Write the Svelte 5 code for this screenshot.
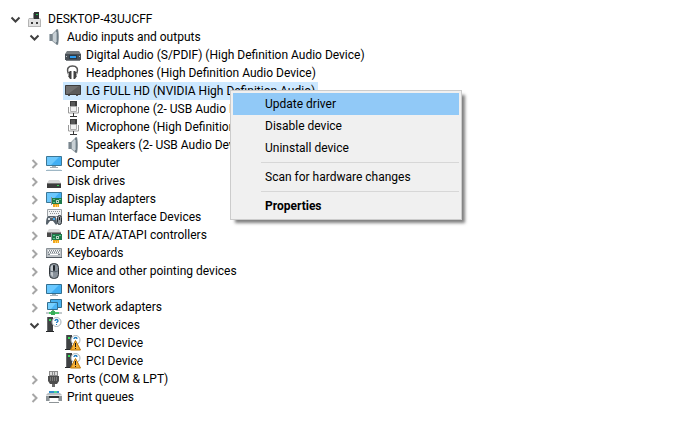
<script>
	let nodes = $state([
		{
			name: 'DESKTOP-43UJCFF',
			icon: 'host',
			open: true,
			children: [
				{
					name: 'Audio inputs and outputs',
					icon: 'speaker',
					open: true,
					children: [
						{ name: 'Digital Audio (S/PDIF) (High Definition Audio Device)', icon: 'spdif' },
						{ name: 'Headphones (High Definition Audio Device)', icon: 'headphones' },
						{ name: 'LG FULL HD (NVIDIA High Definition Audio)', icon: 'tv', selected: true },
						{ name: 'Microphone (2- USB Audio Device)', icon: 'mic' },
						{ name: 'Microphone (High Definition Audio Device)', icon: 'mic' },
						{ name: 'Speakers (2- USB Audio Device)', icon: 'speaker' }
					]
				},
				{ name: 'Computer', icon: 'computer', children: [] },
				{ name: 'Disk drives', icon: 'disk', children: [] },
				{ name: 'Display adapters', icon: 'display', children: [] },
				{ name: 'Human Interface Devices', icon: 'hid', children: [] },
				{ name: 'IDE ATA/ATAPI controllers', icon: 'ide', children: [] },
				{ name: 'Keyboards', icon: 'keyboard', children: [] },
				{ name: 'Mice and other pointing devices', icon: 'mouse', children: [] },
				{ name: 'Monitors', icon: 'monitor', children: [] },
				{ name: 'Network adapters', icon: 'network', children: [] },
				{
					name: 'Other devices',
					icon: 'unknown',
					open: true,
					children: [
						{ name: 'PCI Device', icon: 'warning' },
						{ name: 'PCI Device', icon: 'warning' }
					]
				},
				{ name: 'Ports (COM & LPT)', icon: 'port', children: [] },
				{ name: 'Print queues', icon: 'printer', children: [] }
			]
		}
	])

	const menu = [
		['Update driver', 'Disable device', 'Uninstall device'],
		['Scan for hardware changes'],
		['Properties']
	]

	let active = $state('Update driver')
</script>

{#snippet card()}
	<path d="M5 6h1v8H5z" fill="#8b9599" />
	<path d="M6 7h10v6H6z" fill="#1f7a4a" />
	<path d="M7 8h2v1H7zM13 8h2v1h-2zM7 11h2v1H7z" fill="#5fc48b" />
	<path d="M10 9h3v3h-3z" fill="#b9d8c7" />
	<path d="M11 10h1v1h-1z" fill="#17693f" />
	<path d="M7 13h6v3H7z" fill="#f0a51e" />
	<path d="M9.500 14v2M11.500 14v2" stroke="#ffd565" />
{/snippet}

{#snippet tower()}
	<path d="M1 0h6v14H1z" fill="#404244" />
	<path d="M1 0h1v14H1z" fill="#686b6d" />
	<path d="M3 2h2v2H3z" fill="#35e05a" />
	<path d="M0 14h8v1H0z" fill="#27292b" />
{/snippet}

{#snippet glyph(kind)}
	<svg class="icon" viewBox="0 0 16 16" aria-hidden="true">
		{#if kind === 'host'}
			<path d="M1 9l1-2h11l1 2v7H1z" fill="#b4b4b4" />
			<path d="M2 8h11v7H2z" fill="#e2e2e2" />
			<path d="M7 1h5v7H7z" fill="#303334" />
			<path d="M6 2h1v6H6z" fill="#8a8c8d" />
			<path d="M9 3h2v1H9z" fill="#20c34d" />
			<path d="M4 11h2v2H4zM9 11h2v2H9z" fill="#3a3a3a" />
		{:else if kind === 'speaker'}
			<path d="M3 5h4v7H3z" fill="#7b868e" />
			<path d="M3 5h1v7H3z" fill="#b2bbc1" />
			<path d="M6 5l5-5v16l-5-4z" fill="#8e999f" />
			<path d="M7 5l3-3v12l-3-2z" fill="#c8d0d5" />
			<path d="M10 1l2-1c1 5 1 11 0 16l-2-1z" fill="#6f7d86" />
			<path d="M10 3h1v10h-1z" fill="#a4b0b7" />
		{:else if kind === 'spdif'}
			<path d="M2 4h12l2 3H0z" fill="#777d81" />
			<path d="M0 7h16v6H0z" fill="#485057" />
			<path d="M1 13h14v1H1z" fill="#7b8084" />
			<path d="M4 8h8v4H4z" fill="#2b3a46" />
			<path d="M5 9h6v2H5z" fill="#2c9cf0" />
			<path d="M1 9h1v1H1zM14 9h1v1h-1z" fill="#b9c0c3" />
		{:else if kind === 'headphones'}
			<path d="M3.500 9C1 3 4 1 7.500 1S14 3 11.500 9" fill="none" stroke="#555" stroke-width="1.500" />
			<path d="M5 6h1.500v8H5L3 11V8zM10 6H8.500v8H10l2-3V8z" fill="#414141" />
			<path d="M3 8h1v3H3zM11 8h1v3h-1z" fill="#a5a5a5" />
		{:else if kind === 'tv'}
			<path d="M.5 2.500h15v9H.5z" fill="#5b5b5b" stroke="#3c3c3c" />
			<path d="M1 3h13L3 11H1z" fill="#707070" />
			<path d="M3 12h2v1H3zM11 12h2v1h-2z" fill="#555" />
		{:else if kind === 'mic'}
			<path d="M5 0h7v6H5z" fill="#3b3b3b" />
			<path d="M6 1h4v4H6z" fill="#595959" />
			<path d="M5.500 5.500h6v5h-6z" fill="#f2f2f2" stroke="#b0b0b0" />
			<path d="M3.500 6v6h10V6" fill="none" stroke="#999" />
			<path d="M8 12h1v3H8zM5 15h7v1H5z" fill="#383838" />
		{:else if kind === 'computer'}
			<path d="M.5 1.500h15v9H.5z" fill="#40aef3" stroke="#3b7796" />
			<path d="M1 2h12L5 10H1z" fill="#6cc8fd" />
			<path d="M6 11h4v1H6zM4 12h8v1H4z" fill="#a2acb2" />
			<path d="M0 15h16v1H0z" fill="#9eb7c5" />
			<path d="M1 14h14v1H1z" fill="#e5edf1" />
		{:else if kind === 'disk'}
			<path d="M3 7h10l2 3H1z" fill="#d8d8d8" />
			<path d="M1 10h14v5H1z" fill="#3c3c3c" />
			<path d="M1 10h14v1H1z" fill="#777" />
			<path d="M11 12h2v1h-2z" fill="#35d956" />
		{:else if kind === 'display'}
			<path d="M.5 1.500h15v10H.5z" fill="#40aef3" stroke="#3b7796" />
			<path d="M1 2h12l-8 9H1z" fill="#6cc8fd" />
			{@render card()}
		{:else if kind === 'hid'}
			<path d="M1.500.5h14v7h-14z" fill="#f1f3f4" stroke="#9da3a7" />
			<path d="M3 2.500h11M4 4.500h10" stroke="#8d9498" stroke-dasharray="1 1" />
			<path d="M0 15c0-5 1-8 3-8h5c2 0 3 3 3 8l-1 1-3-4H4l-3 4z" fill="#56616a" />
			<path d="M2 9h2v2H2z" fill="#dce2e6" />
			<path d="M7 9h2v2H7z" fill="#41aaf0" />
			<path d="M4 8h3v1H4z" fill="#9fa8ae" />
			<rect x="11.500" y="6.500" width="4" height="9" rx="2" fill="#8f979d" stroke="#2e3439" />
			<path d="M13.500 8v3" stroke="#1d1d1d" />
		{:else if kind === 'ide'}
			<path d="M3 2h10l2 3H1z" fill="#dcdcdc" />
			<path d="M1 5h14v5H1z" fill="#4a4a4a" />
			<path d="M1 5h14v1H1z" fill="#8d8d8d" />
			{@render card()}
		{:else if kind === 'keyboard'}
			<path d="M.5 3.500h15v9H.5z" fill="#bfc4c8" stroke="#8a9197" />
			<path d="M0 12h16v1H0z" fill="#525a62" />
			<path d="M2 5.500h12M3 7.500h11" stroke="#fff" stroke-dasharray="1 1" />
			<path d="M3 5.500h11M2 7.500h12" stroke="#7b848b" stroke-dasharray="1 1" />
			<path d="M2 9.500h2M12 9.500h2" stroke="#7b848b" />
			<path d="M4 9.500h8" stroke="#fff" />
		{:else if kind === 'mouse'}
			<rect x="3.500" y=".5" width="9" height="15" rx="4" fill="#89929b" stroke="#30363b" />
			<path d="M5 3v9l2 2V2z" fill="#c1c7cc" />
			<path d="M4 8c3 1 5 1 8 0" fill="none" stroke="#56616b" />
			<rect x="7" y="2" width="2" height="6" rx="1" fill="#20252a" />
		{:else if kind === 'monitor'}
			<path d="M.5 3.500h15v9H.5z" fill="#40aef3" stroke="#326f90" />
			<path d="M1 4h12l-8 8H1z" fill="#69c8ff" />
			<path d="M6 13h4v1H6zM4 14h8v1H4z" fill="#a5b2ba" />
		{:else if kind === 'network'}
			<path d="M4.500.5h11v8h-11z" fill="#48b1ef" stroke="#326f90" />
			<path d="M1.500 3.500h10v7h-10z" fill="#4bb5f6" stroke="#326f90" />
			<path d="M2 4h8l-5 6H2z" fill="#76d0ff" />
			<path d="M6 11h2v2H6z" fill="#7da58a" />
			<path d="M3 13h10v2H3z" fill="#4cc56c" />
			<path d="M0 13h3v2H0zM13 13h3v2h-3z" fill="#c3cacd" />
			<path d="M5 12h4v4H5z" fill="#38ad58" />
		{:else if kind === 'unknown'}
			{@render tower()}
			<circle cx="10.500" cy="5" r="4.500" fill="#fff" stroke="#a6b0b6" />
			<path d="M9 4c0-2 3-2 3 0 0 1-1.500 1-1.500 2" fill="none" stroke="#1678be" stroke-width="1.300" />
			<path d="M10 7h1v1h-1z" fill="#1678be" />
		{:else if kind === 'warning'}
			{@render tower()}
			<circle cx="10.500" cy="5" r="4.500" fill="#fff" stroke="#a6b0b6" />
			<path d="M9 4c0-2 3-2 3 0" fill="none" stroke="#1678be" stroke-width="1.300" />
			<path d="M10.500 5.500l5 9.500h-10z" fill="#f6b034" stroke="#b9760a" />
			<path d="M10 8h1v4h-1zM10 13h1v1h-1z" fill="#161616" />
		{:else if kind === 'port'}
			<path d="M3 0h9v5H3z" fill="#8b8b8b" />
			<path d="M4 1h2v3H4zM7 1h1v3H7zM9 1h2v3H9z" fill="#dcdcdc" />
			<path d="M2 5h11v5l-2 3H4l-2-3z" fill="#4e4e4e" />
			<path d="M4 6h1v4H4zM6 6h1v4H6zM8 6h1v4H8zM10 6h1v4h-1z" fill="#7b7b7b" />
			<path d="M6 13h3v3H6z" fill="#6a6a6a" />
		{:else}
			<path d="M3 2h10v3H3z" fill="#318fce" />
			<path d="M8 2h3v2H8z" fill="#46d59a" />
			<path d="M2 4h12l2 2v6H0V6z" fill="#b9bec1" />
			<path d="M0 6h16v1H0z" fill="#e3e6e7" />
			<path d="M0 7h3v5H0zM13 7h3v5h-3z" fill="#8d9498" />
			<path d="M3 7h10v2H3z" fill="#2f3335" />
			<path d="M4 9h8v4H4z" fill="#fff" />
			<path d="M3 13h10v1H3z" fill="#8e9497" />
		{/if}
	</svg>
{/snippet}

{#snippet branch(items)}
	<ul>
		{#each items as node}
			<li>
				<div class="row">
					{#if node.children}
						<button
							class="toggle"
							class:open={node.open}
							aria-label="Toggle {node.name}"
							aria-expanded={!!node.open}
							onclick={() => (node.open = !node.open)}
						>
							<svg viewBox="0 0 16 16" aria-hidden="true">
								{#if node.open}
									<path d="M4.500 6.500l4 4 4-4" />
								{:else}
									<path d="M6.500 5l4 4-4 4" />
								{/if}
							</svg>
						</button>
					{:else}
						<span class="toggle"></span>
					{/if}
					<button class="item" class:selected={node.selected}>
						{@render glyph(node.icon)}
						<span>{node.name}</span>
					</button>
				</div>
				{#if node.open && node.children}
					{@render branch(node.children)}
				{/if}
			</li>
		{/each}
	</ul>
{/snippet}

<main>
	<nav class="tree" aria-label="Devices">
		{@render branch(nodes)}
	</nav>

	<div class="menu" role="menu">
		{#each menu as group}
			<div class="group" role="group">
				{#each group as label}
					<button
						role="menuitem"
						class:active={active === label}
						class:default={label === 'Properties'}
						onmouseenter={() => (active = label)}
					>
						{label}
					</button>
				{/each}
			</div>
		{/each}
	</div>
</main>

<style>
	:global(body) {
		margin: 0;
		background: #fff;
	}

	main {
		position: relative;
		padding: 10px 7px;
		font-family: Roboto, 'Open Sans', sans-serif;
		font-size: 12px;
		line-height: 18px;
		color: #000;
	}

	ul {
		margin: 0;
		padding: 0;
		list-style: none;
	}

	li ul {
		padding-left: 19px;
	}

	button {
		margin: 0;
		padding: 0;
		border: 0;
		background: none;
		font: inherit;
		color: inherit;
		text-align: left;
	}

	.row {
		display: flex;
		gap: 2px;
		height: 18px;
	}

	.toggle {
		flex: none;
		display: flex;
		align-items: center;
		width: 16px;
	}

	.toggle svg {
		width: 16px;
		height: 16px;
		fill: none;
		stroke: #a6a6a6;
		stroke-width: 2;
	}

	.toggle.open svg {
		stroke: #404040;
	}

	.item {
		display: flex;
		align-items: center;
		gap: 5px;
		padding: 0 3px 0 2px;
		white-space: nowrap;
	}

	.item.selected {
		background: #cce8ff;
	}

	.icon {
		flex: none;
		width: 16px;
		height: 16px;
	}

	.menu {
		position: absolute;
		top: 90px;
		left: 230px;
		box-sizing: border-box;
		min-width: 232px;
		padding: 2px;
		border: 1px solid #ccc;
		background: #f0f0f0;
		box-shadow: 4px 4px 3px -1px rgba(0, 0, 0, 0.5);
	}

	.group + .group::before {
		content: '';
		display: block;
		height: 1px;
		margin: 3px 0 3px 28px;
		background: #d7d7d7;
	}

	.menu button {
		display: block;
		width: 100%;
		padding: 0 32px;
		line-height: 22px;
		white-space: nowrap;
	}

	.menu .active {
		background: #91c9f7;
	}

	.menu .default {
		font-weight: 700;
	}
</style>
